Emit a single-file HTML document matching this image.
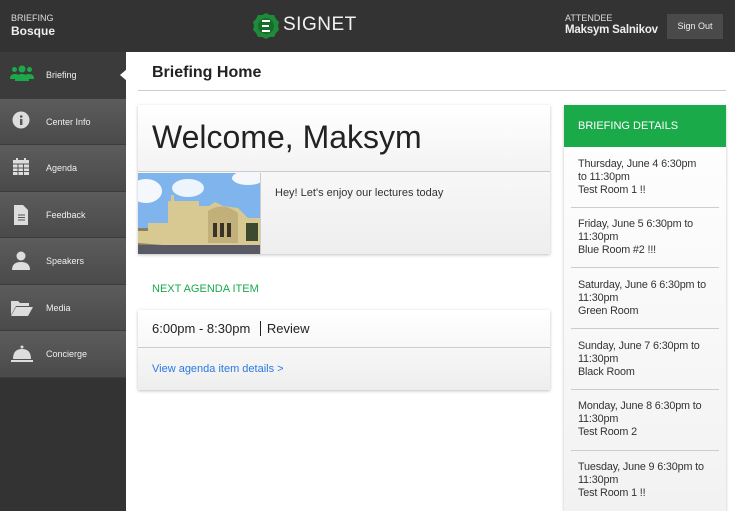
<!DOCTYPE html>
<html><head><meta charset="utf-8"><style>
*{margin:0;padding:0;box-sizing:border-box}
body{width:735px;height:511px;overflow:hidden;font-family:"Liberation Sans",Arial,sans-serif;background:#fff;position:relative}
.hdr{position:absolute;left:0;top:0;width:735px;height:52px;background:#333}
.side{position:absolute;left:0;top:52px;width:126px;height:459px;background:#333}
.item{position:absolute;left:0;width:126px;height:46.5px;background:linear-gradient(#5c5c5c,#4a4a4a);border-bottom:1px solid #3c3c3c;color:#f0f0f0;font-size:9px}
.item.act{background:#3b3b3b}
.item span{position:absolute;left:46px;top:18px}
.item svg{position:absolute;left:10px;top:11px}
.abs{position:absolute}
.card{position:absolute;background:linear-gradient(#fff,#eee);box-shadow:0 1px 3px rgba(0,0,0,.25)}
.det{position:absolute;left:564px;width:162px;font-size:10.8px;letter-spacing:-0.15px;white-space:nowrap;color:#333;line-height:13px;padding:11px 14px 0}
.sep{position:absolute;left:571px;width:148px;height:1px;background:#ccc}
</style></head><body>
<div class="hdr">
 <div class="abs" style="left:11px;top:13px;color:#ddd;font-size:9px">BRIEFING</div>
 <div class="abs" style="left:11px;top:24px;color:#eee;font-size:12px;font-weight:bold">Bosque</div>
 <svg class="abs" style="left:252px;top:12px" width="28" height="28" viewBox="0 0 28 28"><path d="M14 1l4 2 4 0 2 4 3 3-1 4 1 4-3 3-2 4-4 0-4 2-4-2-4 0-2-4-3-3 1-4-1-4 3-3 2-4 4 0z" fill="#1e8a3a"/><circle cx="14" cy="14" r="8" fill="#156d2c"/><path d="M10 9h8M10 14h7M10 19h8" stroke="#fff" stroke-width="2"/></svg>
 <div class="abs" style="left:283px;top:14px;color:#f2f2f2;font-size:19px;letter-spacing:0.5px;font-weight:300">SIGNET</div>
 <div class="abs" style="left:565px;top:13px;color:#ddd;font-size:9px">ATTENDEE</div>
 <div class="abs" style="left:565px;top:24px;color:#eee;font-size:11.5px;font-weight:bold;letter-spacing:-0.2px">Maksym Salnikov</div>
 <div class="abs" style="left:667px;top:14px;width:56px;height:25px;background:#4a4a4a;color:#eee;font-size:9px;text-align:center;line-height:25px">Sign Out</div>
</div>
<div class="side">
 <div class="item act" style="top:0"><svg width="24" height="20" viewBox="0 0 24 20"><circle cx="12" cy="6" r="3.5" fill="#1aaa4a"/><circle cx="4.5" cy="6.5" r="2.5" fill="#1aaa4a"/><circle cx="19.5" cy="6.5" r="2.5" fill="#1aaa4a"/><path d="M5 18q0-7 7-7t7 7z" fill="#1aaa4a"/><path d="M0 16q0-5 4.5-5t4 2l-2 3z M24 16q0-5-4.5-5t-4 2l2 3z" fill="#1aaa4a"/></svg><span>Briefing</span></div>
 <svg class="abs" style="left:120px;top:17px" width="7" height="12"><path d="M7 0L0 6 7 12z" fill="#fff"/></svg>
 <div class="item" style="top:46.5px"><svg width="24" height="24" viewBox="0 0 24 24"><circle cx="11" cy="10" r="8.5" fill="#ddd"/><rect x="10" y="9" width="2.4" height="6" fill="#555"/><circle cx="11.2" cy="6.5" r="1.3" fill="#555"/></svg><span>Center Info</span></div>
 <div class="item" style="top:93px"><svg width="24" height="24" viewBox="0 0 24 24"><rect x="3" y="4" width="16" height="15" fill="#ddd"/><rect x="6" y="2" width="2" height="4" fill="#ddd"/><rect x="14" y="2" width="2" height="4" fill="#ddd"/><path d="M3 8h16M3 12h16M3 15.5h16M8 8v11M13.5 8v11" stroke="#555" stroke-width="1"/></svg><span>Agenda</span></div>
 <div class="item" style="top:139.5px"><svg width="24" height="24" viewBox="0 0 24 24"><path d="M4 2h9l5 5v15H4z" fill="#ddd"/><path d="M8 12h7M8 14.5h7M8 17h7" stroke="#555"/></svg><span>Feedback</span></div>
 <div class="item" style="top:186px"><svg width="24" height="24" viewBox="0 0 24 24"><circle cx="11" cy="7" r="4.5" fill="#ddd"/><path d="M2 21q0-8 9-8t9 8z" fill="#ddd"/></svg><span>Speakers</span></div>
 <div class="item" style="top:232.5px"><svg width="24" height="24" viewBox="0 0 24 24"><path d="M1 5h7l2 2h9v3H6l-5 9z" fill="#ddd"/><path d="M6 11h17l-5 9H1z" fill="#ddd"/></svg><span>Media</span></div>
 <div class="item" style="top:279px"><svg width="24" height="24" viewBox="0 0 24 24"><circle cx="12" cy="5" r="1.5" fill="#ddd"/><path d="M3 17q0-10 9-10t9 10z" fill="#ddd"/><rect x="1" y="18" width="22" height="2" fill="#ddd"/></svg><span>Concierge</span></div>
</div>

<div class="abs" style="left:152px;top:64px;font-size:16px;font-weight:bold;color:#222">Briefing Home</div>
<div class="abs" style="left:138px;top:90px;width:588px;height:1px;background:#ccc"></div>

<div class="card" style="left:138px;top:105px;width:412px;height:149px"></div>
<div class="abs" style="left:138px;top:105px;width:412px;height:67px;background:linear-gradient(#fff,#f3f3f3);border-bottom:1px solid #ccc"></div>
<div class="abs" style="left:152px;top:119px;font-size:32px;color:#222">Welcome, Maksym</div>
<svg class="abs" style="left:138px;top:173px" width="122" height="81" viewBox="0 0 122 81">
 <rect width="122" height="81" fill="#7fb4ec"/><ellipse cx="8" cy="18" rx="16" ry="12" fill="#f4f8fc"/><ellipse cx="50" cy="15" rx="16" ry="9" fill="#eef4fb"/><ellipse cx="110" cy="5" rx="16" ry="7" fill="#f4f8fc"/>
 <rect x="0" y="55" width="122" height="26" fill="#8a8060"/>
 <path d="M0 70V58h10v-8h20V28h3v-6h3v6h25v5h10l6-4 8 4 15 2 10 10h12v35z" fill="#d8c892"/>
 <path d="M70 38q15-10 30 2v30H70z" fill="#c2b07a"/>
 <rect x="75" y="50" width="4" height="14" fill="#3a3224"/><rect x="82" y="50" width="4" height="14" fill="#3a3224"/><rect x="89" y="50" width="4" height="14" fill="#3a3224"/>
 <rect x="108" y="50" width="12" height="18" fill="#3e4a2e"/>
 <rect x="0" y="72" width="122" height="9" fill="#5a5a66"/>
</svg>
<div class="abs" style="left:260px;top:173px;width:1px;height:81px;background:#ccc"></div>
<div class="abs" style="left:275px;top:187px;font-size:11px;color:#333">Hey! Let's enjoy our lectures today</div>

<div class="abs" style="left:152px;top:283px;font-size:11px;color:#1aaa4a">NEXT AGENDA ITEM</div>
<div class="card" style="left:138px;top:310px;width:412px;height:80px"></div>
<div class="abs" style="left:138px;top:347px;width:412px;height:1px;background:#ccc"></div>
<div class="abs" style="left:152px;top:321px;font-size:13px;color:#222">6:00pm - 8:30pm <span style="display:inline-block;width:1px;height:15px;background:#222;vertical-align:-3px;margin:0 6px 0 6px"></span>Review</div>
<div class="abs" style="left:152px;top:363px;font-size:11px;color:#2a7ae2">View agenda item details &gt;</div>

<div class="card" style="left:564px;top:105px;width:162px;height:406px;background:linear-gradient(#fff,#f2f2f2)"></div>
<div class="abs" style="left:564px;top:105px;width:162px;height:42px;background:#1aaa4a;color:#fff;font-size:11px;padding:15px 0 0 14px">BRIEFING DETAILS</div>
<div class="det" style="top:147px">Thursday, June 4 6:30pm<br>to 11:30pm<br>Test Room 1 !!</div>
<div class="sep" style="top:207px"></div>
<div class="det" style="top:207px">Friday, June 5 6:30pm to<br>11:30pm<br>Blue Room #2 !!!</div>
<div class="sep" style="top:267px"></div>
<div class="det" style="top:268px">Saturday, June 6 6:30pm to<br>11:30pm<br>Green Room</div>
<div class="sep" style="top:328px"></div>
<div class="det" style="top:329px">Sunday, June 7 6:30pm to<br>11:30pm<br>Black Room</div>
<div class="sep" style="top:389px"></div>
<div class="det" style="top:389px">Monday, June 8 6:30pm to<br>11:30pm<br>Test Room 2</div>
<div class="sep" style="top:450px"></div>
<div class="det" style="top:450px">Tuesday, June 9 6:30pm to<br>11:30pm<br>Test Room 1 !!</div>
</body></html>
